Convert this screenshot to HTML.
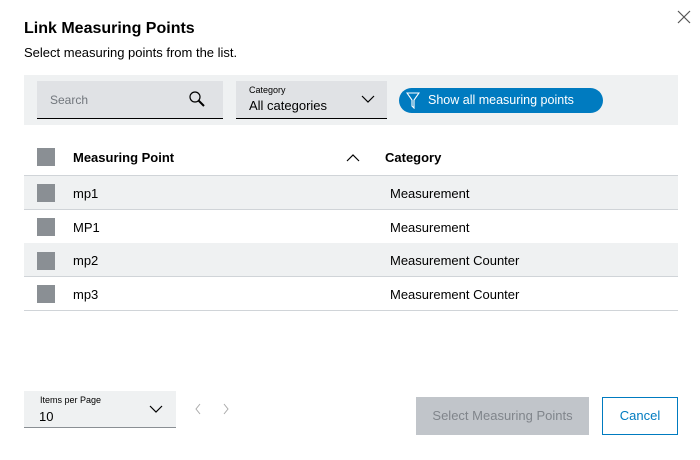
<!DOCTYPE html>
<html><head><meta charset="utf-8"><style>
*{box-sizing:border-box;margin:0;padding:0}
body{width:700px;height:460px;background:#fff;font-family:"Liberation Sans",sans-serif;color:#000;position:relative;overflow:hidden}
.abs{position:absolute}
.cb{position:absolute;left:37px;width:18px;height:18px;background:#8a8f94}
.row{position:absolute;left:24px;width:654px;height:34px;border-bottom:1px solid #d0d4d8;font-size:13px}
.row span{position:absolute;top:10px}
</style></head><body>
<div class="abs" style="left:24px;top:20px;font-size:16px;font-weight:bold">Link Measuring Points</div>
<svg class="abs" style="left:677px;top:10px" width="14" height="14" viewBox="0 0 14 14"><path d="M1 1L13 13M13 1L1 13" stroke="#555" stroke-width="1.2"/></svg>
<div class="abs" style="left:24px;top:45px;font-size:13px">Select measuring points from the list.</div>
<div class="abs" style="left:24px;top:75px;width:654px;height:50px;background:#eff1f2"></div>
<div class="abs" style="left:37px;top:81px;width:186px;height:38px;background:#e0e2e5;border-bottom:1px solid #000"></div>
<div class="abs" style="left:50px;top:93px;font-size:12px;color:#71767c">Search</div>
<svg class="abs" style="left:188px;top:90px" width="18" height="18" viewBox="0 0 18 18"><circle cx="7" cy="7" r="5" fill="none" stroke="#000" stroke-width="1.2"/><path d="M10.5 10.5L16 16" stroke="#000" stroke-width="2"/></svg>
<div class="abs" style="left:236px;top:81px;width:151px;height:38px;background:#e0e2e5;border-bottom:1px solid #000"></div>
<div class="abs" style="left:249px;top:85px;font-size:9px">Category</div>
<div class="abs" style="left:249px;top:98px;font-size:13px">All categories</div>
<svg class="abs" style="left:361px;top:95px" width="14" height="9" viewBox="0 0 14 9"><path d="M1 1L7 7L13 1" fill="none" stroke="#000" stroke-width="1.2"/></svg>
<div class="abs" style="left:399px;top:88px;width:204px;height:25px;background:#007bc0;border-radius:13px"></div>
<svg class="abs" style="left:406px;top:92px" width="14" height="17" viewBox="0 0 14 17"><path d="M1 1H13L8 8V16L6 14V8Z" fill="none" stroke="#fff" stroke-width="1.1"/></svg>
<div class="abs" style="left:428px;top:93px;font-size:12.5px;color:#fff">Show all measuring points</div>
<div class="cb" style="top:148px"></div>
<div class="abs" style="left:73px;top:150px;font-size:13px;font-weight:bold">Measuring Point</div>
<svg class="abs" style="left:346px;top:153px" width="14" height="9" viewBox="0 0 14 9"><path d="M1 8L7 2L13 8" fill="none" stroke="#000" stroke-width="1.2"/></svg>
<div class="abs" style="left:385px;top:150px;font-size:13px;font-weight:bold">Category</div>
<div class="abs" style="left:24px;top:175px;width:654px;height:1px;background:#d0d4d8"></div>
<div class="row" style="top:176px;background:#eff1f2"><span style="left:49px">mp1</span><span style="left:366px">Measurement</span></div>
<div class="cb" style="top:184px"></div>
<div class="row" style="top:210px"><span style="left:49px">MP1</span><span style="left:366px">Measurement</span></div>
<div class="cb" style="top:218px"></div>
<div class="row" style="top:243px;background:#eff1f2"><span style="left:49px">mp2</span><span style="left:366px">Measurement Counter</span></div>
<div class="cb" style="top:252px"></div>
<div class="row" style="top:277px"><span style="left:49px">mp3</span><span style="left:366px">Measurement Counter</span></div>
<div class="cb" style="top:285px"></div>
<div class="abs" style="left:24px;top:391px;width:152px;height:37px;background:#eff1f2;border-bottom:1px solid #8a8f94"></div>
<div class="abs" style="left:40px;top:395px;font-size:9px">Items per Page</div>
<div class="abs" style="left:39px;top:409px;font-size:13px">10</div>
<svg class="abs" style="left:149px;top:405px" width="14" height="9" viewBox="0 0 14 9"><path d="M1 1L7 7L13 1" fill="none" stroke="#000" stroke-width="1.2"/></svg>
<svg class="abs" style="left:194px;top:403px" width="8" height="12" viewBox="0 0 8 12"><path d="M6 1L2 6L6 11" fill="none" stroke="#aaa" stroke-width="1"/></svg>
<svg class="abs" style="left:222px;top:403px" width="8" height="12" viewBox="0 0 8 12"><path d="M2 1L6 6L2 11" fill="none" stroke="#aaa" stroke-width="1"/></svg>
<div class="abs" style="left:416px;top:397px;width:173px;height:38px;background:#c1c5ca;color:#80858b;font-size:13px;text-align:center;line-height:38px">Select Measuring Points</div>
<div class="abs" style="left:602px;top:397px;width:76px;height:38px;border:1px solid #007bc0;color:#007bc0;font-size:13px;text-align:center;line-height:36px">Cancel</div>
</body></html>
